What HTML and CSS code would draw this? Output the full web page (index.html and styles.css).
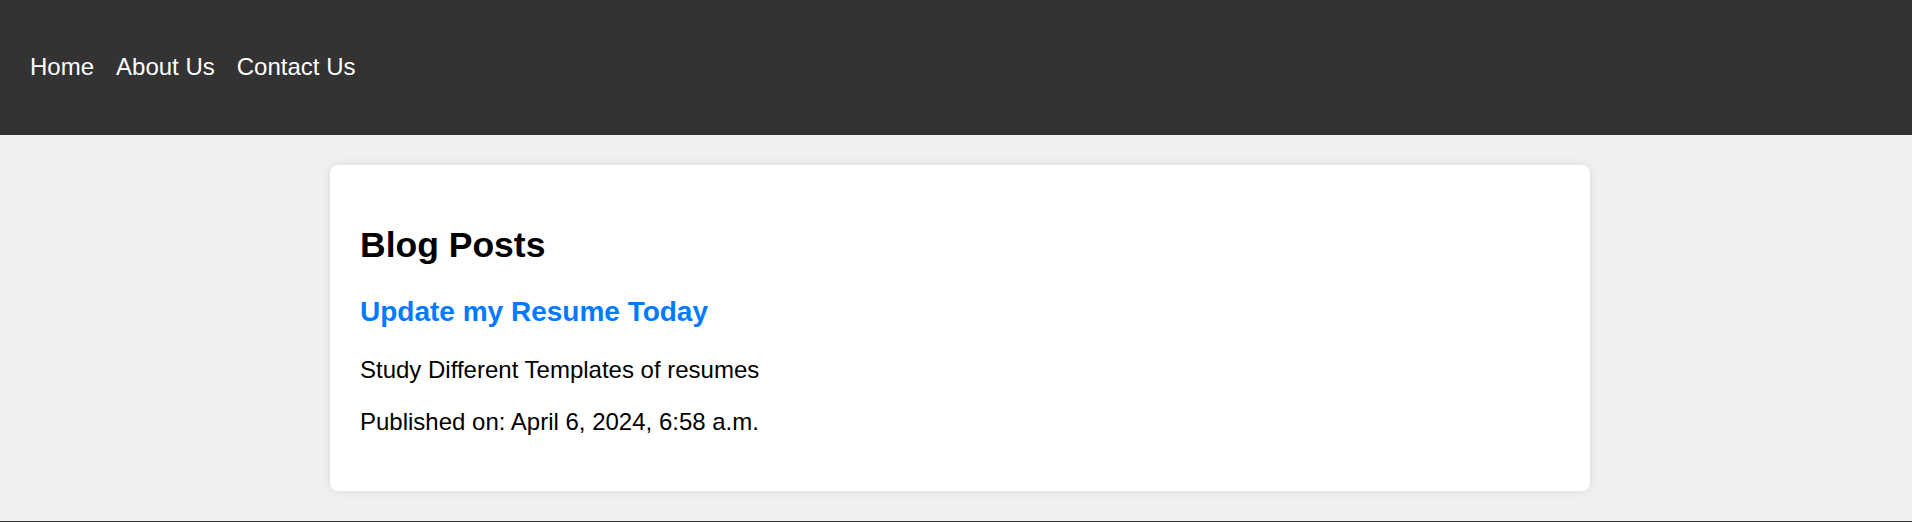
FILE: index.html
```html
<!DOCTYPE html>
<html lang="en">
<head>
<meta charset="utf-8">
<title>Blog Posts</title>
<link rel="stylesheet" href="styles.css">
</head>
<body>
<header class="site-header">
  <nav>
    <ul class="nav-list">
      <li><a href="#">Home</a></li>
      <li><a href="#">About Us</a></li>
      <li><a href="#">Contact Us</a></li>
    </ul>
  </nav>
</header>
<main class="main">
  <section class="card">
    <h2 class="title">Blog Posts</h2>
    <article class="post">
      <h3 class="post-title"><a href="#">Update my Resume Today</a></h3>
      <p class="post-text">Study Different Templates of resumes</p>
      <p class="post-text">Published on: April 6, 2024, 6:58 a.m.</p>
    </article>
  </section>
</main>
<footer class="site-footer"></footer>
</body>
</html>
```
FILE: styles.css
```css
html, body {
  margin: 0;
  padding: 0;
}
body {
  background: #f0f0f0;
  font-family: "Liberation Sans", Arial, sans-serif;
  color: #000;
}
.site-header {
  background: #333333;
  padding: 29px 30px 30px;
}
.nav-list {
  list-style: none;
  margin: 24px 0;
  padding: 0;
  display: flex;
  gap: 22px;
  font-size: 24px;
  line-height: 28px;
}
.nav-list a {
  color: #ffffff;
  text-decoration: none;
}
.main {
  padding: 30px 0 30px 8px;
}
.card {
  width: 1200px;
  margin: 0 auto;
  background: #ffffff;
  padding: 30px 30px 31px;
  border-radius: 8px;
  box-shadow: 0 0 10px rgba(0, 0, 0, 0.1);
}
.title {
  font-size: 35.5px;
  font-weight: bold;
  margin: 30px 0;
}
.post-title {
  font-size: 28px;
  margin: 29px 0 28px;
}
.post-title a {
  color: #007bff;
  text-decoration: none;
}
.post-text {
  font-size: 24px;
  margin: 24px 0;
}
.site-footer {
  background: #333333;
  height: 60px;
}
```
